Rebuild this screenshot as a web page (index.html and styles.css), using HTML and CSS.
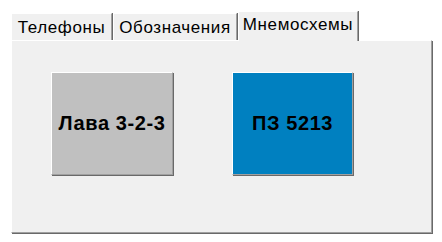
FILE: index.html
```html
<!DOCTYPE html>
<html>
<head>
<meta charset="utf-8">
<link rel="stylesheet" href="styles.css">
</head>
<body>
<div class="tabs">
  <div class="tabstrip">
    <div class="tab t1">Телефоны</div>
    <div class="tab t2">Обозначения</div>
    <div class="tab active t3">Мнемосхемы</div>
  </div>
  <div class="panel">
    <div class="btn gray">Лава 3-2-3</div>
    <div class="btn blue">ПЗ 5213</div>
  </div>
</div>
</body>
</html>
```
FILE: styles.css
```css
html, body {
  margin: 0;
  padding: 0;
  background: #ffffff;
}
body {
  width: 442px;
  height: 242px;
  font-family: "Liberation Sans", Arial, sans-serif;
}
.tabs {
  padding: 11px 0 0 11px;
  width: 421px;
}
.tabstrip {
  display: flex;
  align-items: flex-end;
  height: 29px;
  position: relative;
  z-index: 1;
}
.tab {
  box-sizing: border-box;
  height: 27px;
  background: #f0f0f0;
  border-top: 1px solid #ffffff;
  border-left: 1px solid #ffffff;
  border-right: 1px solid #a0a0a0;
  box-shadow: 1px 0 0 #696969;
  font-size: 17px;
  letter-spacing: 0.6px;
  color: #000;
  display: flex;
  justify-content: center;
  padding-top: 5px;
  line-height: 18px;
}
.t1 { width: 101px; }
.t2 { width: 124px; margin-left: 1px; }
.t3 { width: 120px; margin-left: 1px; }
.tab.active {
  height: 30px;
  margin-bottom: -1px;
  padding-top: 4px;
}
.panel {
  box-sizing: border-box;
  height: 193px;
  background: #f0f0f0;
  border-top: 1px solid #ffffff;
  border-left: 1px solid #ffffff;
  border-right: 1px solid #a0a0a0;
  border-bottom: 1px solid #a0a0a0;
  box-shadow: 1px 1px 0 #696969;
  display: flex;
  align-items: flex-start;
  gap: 59px;
  padding: 31px 0 0 39px;
}
.btn {
  box-sizing: border-box;
  width: 122px;
  height: 103px;
  border-top: 1px solid #ffffff;
  border-left: 1px solid #ffffff;
  border-right: 1px solid #a0a0a0;
  border-bottom: 1px solid #a0a0a0;
  box-shadow: 1px 1px 0 #696969;
  display: flex;
  align-items: center;
  justify-content: center;
  font-weight: bold;
  font-size: 20px;
  letter-spacing: 0.6px;
  color: #000;
}
.gray { background: #c0c0c0; }
.blue { background: #0080c0; width: 121px; }
```
